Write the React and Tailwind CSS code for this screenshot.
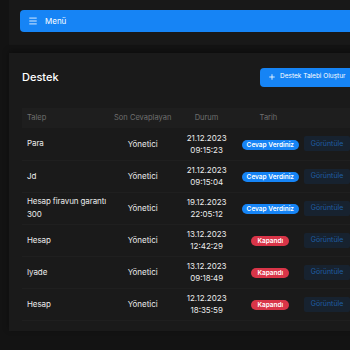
import { Menu, Plus } from 'lucide-react';

const tickets = [
  { title: 'Para', by: 'Yönetici', date: '21.12.2023', time: '09:15:23', status: 'answered' },
  { title: 'Jd', by: 'Yönetici', date: '21.12.2023', time: '09:15:04', status: 'answered' },
  { title: 'Hesap firavun garantı 300', by: 'Yönetici', date: '19.12.2023', time: '22:05:12', status: 'answered' },
  { title: 'Hesap', by: 'Yönetici', date: '13.12.2023', time: '12:42:29', status: 'closed' },
  { title: 'Iyade', by: 'Yönetici', date: '13.12.2023', time: '09:18:49', status: 'closed' },
  { title: 'Hesap', by: 'Yönetici', date: '12.12.2023', time: '18:35:59', status: 'closed' },
];

function StatusBadge({ status }) {
  if (status === 'answered') {
    return (
      <span className="inline-block whitespace-nowrap rounded-full bg-[#1684f5] px-[5px] py-[1px] text-[6.5px] font-semibold leading-[8px] text-white">
        Cevap Verdiniz
      </span>
    );
  }
  return (
    <span className="inline-block whitespace-nowrap rounded-full bg-[#d93548] px-[6px] py-[1px] text-[6.5px] font-semibold leading-[8px] text-white">
      Kapandı
    </span>
  );
}

function App() {
  return (
    <div className="h-[350px] w-[350px] overflow-hidden bg-[#131313] pl-[9px] text-[#e8e8e8]" style={{ fontFamily: 'Inter, "Noto Sans", sans-serif' }}>
      {/* Top menu card */}
      <header className="h-[45px] w-[360px] bg-[#181818] pl-[11px] pt-[10px]">
        <div className="flex h-[22px] items-center gap-[7px] rounded-[4px] bg-[#1684f5] pl-[8px] text-[8px] text-white">
          <Menu size={10} strokeWidth={2} />
          <span>Menü</span>
        </div>
      </header>

      {/* Support card */}
      <section className="mt-[8px] h-[278px] w-[360px] bg-[#1a1a1a] pl-[13px] shadow-[0_-2px_6px_rgba(0,0,0,0.35)]">
        <div className="flex h-[46px] items-center pt-[2px]">
          <h1 className="w-[238px] shrink-0 text-[11px] font-medium text-white">Destek</h1>
          <button className="flex h-[19px] shrink-0 items-center gap-[4px] whitespace-nowrap rounded-[4px] bg-[#1684f5] pl-[8px] pr-[14px] text-[6.5px] text-white">
            <Plus size={8} strokeWidth={2.5} />
            <span>Destek Talebi Oluştur</span>
          </button>
        </div>

        <table className="mt-[9px] border-collapse text-[8px]" style={{ tableLayout: 'fixed' }}>
          <colgroup>
            <col className="w-[92px]" />
            <col className="w-[58px]" />
            <col className="w-[70px]" />
            <col className="w-[54px]" />
            <col className="w-[70px]" />
          </colgroup>
          <thead>
            <tr className="h-[20px] bg-[#1e1e1e] text-[7.5px] text-[#6f6f6f]">
              <th className="pl-[5px] text-left font-normal">Talep</th>
              <th className="whitespace-nowrap font-normal">Son Cevaplayan</th>
              <th className="pl-[8px] text-left font-normal">
                <span className="pl-[15px]">Durum</span>
              </th>
              <th className="text-left font-normal">
                <span className="pl-[18px]">Tarih</span>
              </th>
              <th></th>
            </tr>
          </thead>
          <tbody>
            {tickets.map((t, i) => (
              <tr key={i} className="h-[32px] border-b border-[#1f1f1f]">
                <td className="pl-[5px] leading-[13px] tracking-[-0.1px] text-[#ececec]">{t.title}</td>
                <td className="text-center text-[#ececec]">{t.by}</td>
                <td className="text-center leading-[12px] text-[#ececec]">
                  <div>{t.date}</div>
                  <div>{t.time}</div>
                </td>
                <td className="text-center">
                  <StatusBadge status={t.status} />
                </td>
                <td className="pl-[5px]">
                  <button className="flex h-[15px] w-[46px] items-center justify-center rounded-[2px] bg-[#17222f] text-[7px] text-[#1f5ea2]">
                    Görüntüle
                  </button>
                </td>
              </tr>
            ))}
          </tbody>
        </table>
      </section>
    </div>
  );
}

export default App;
